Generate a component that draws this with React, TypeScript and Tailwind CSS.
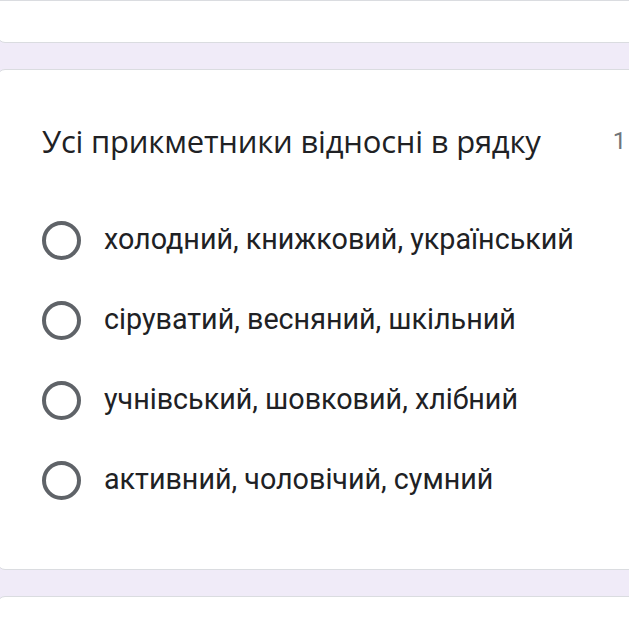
const options = [
  "холодний, книжковий, український",
  "сіруватий, весняний, шкільний",
  "учнівський, шовковий, хлібний",
  "активний, чоловічий, сумний",
];

export default function App() {
  return (
    <div className="w-[629px] h-[629px] overflow-hidden bg-[#f0ebf8] flex flex-col gap-[26px]">
      <div className="h-[43px] -ml-[3px] w-[700px] shrink-0 bg-white border border-[#dadce0] rounded-b-[8px]" />
      <div className="h-[501px] -ml-[3px] w-[700px] shrink-0 bg-white border border-[#dadce0] rounded-[8px] pl-[44px] pt-[51px]">
        <div className="flex items-start gap-[72px]">
          <h2 className="text-[31px] leading-[40px] text-[#202124] font-['Open_Sans',sans-serif] tracking-[-0.2px]">
            Усі прикметники відносні в рядку
          </h2>
          <span className="text-[24px] leading-[40px] text-[#70757a] font-['Roboto',sans-serif] whitespace-nowrap">
            1 бал
          </span>
        </div>
        <div className="mt-[59px] flex flex-col gap-[40px]">
          {options.map((o) => (
            <label key={o} className="flex items-center gap-[23px] h-[40px]">
              <span className="w-[39px] h-[39px] rounded-full border-[4px] border-[#5f6368] shrink-0" />
              <span className="text-[28.7px] text-[#202124] font-['Roboto',sans-serif]">{o}</span>
            </label>
          ))}
        </div>
      </div>
      <div className="h-[60px] -ml-[3px] w-[700px] shrink-0 bg-white border border-[#dadce0] rounded-[8px]" />
    </div>
  );
}
